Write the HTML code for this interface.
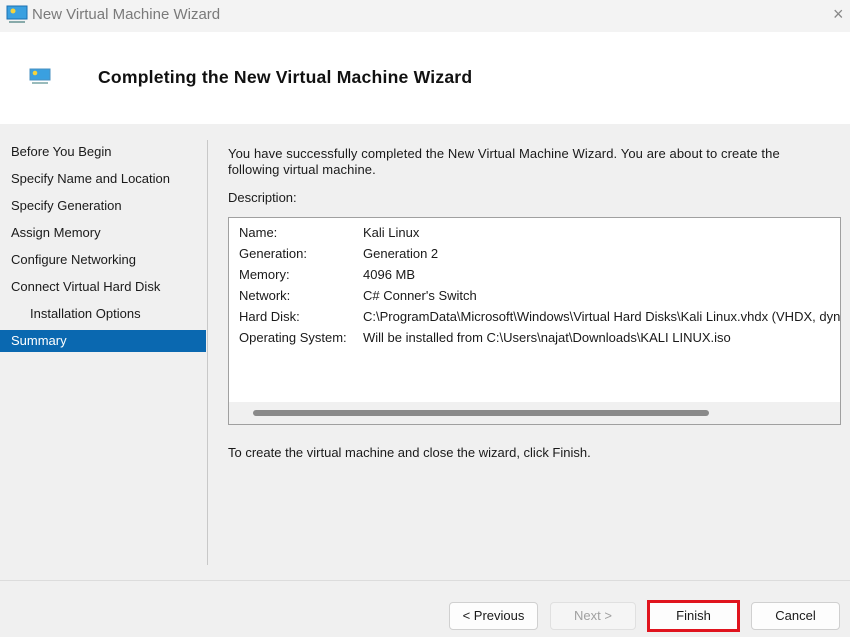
<!DOCTYPE html>
<html><head><meta charset="utf-8"><style>
*{margin:0;padding:0;box-sizing:border-box}
body{width:850px;height:637px;overflow:hidden;background:#f0f0f0;font-family:"Liberation Sans","DejaVu Sans",sans-serif;font-size:13px;color:#1a1a1a;position:relative}
.a{position:absolute;white-space:nowrap}
.nav{left:11px;font-size:13px}
.btn{position:absolute;top:602px;height:28px;background:#fdfdfd;border:1px solid #d0d0d0;border-radius:4px;text-align:center;line-height:26px;font-size:13px}
</style></head><body>
<div class="a" style="left:0;top:0;width:850px;height:32px;background:#f3f3f3"></div>
<svg class="a" style="left:6px;top:5px" width="22" height="20"><rect x="1" y="1" width="20" height="13" fill="#3aa0e0" stroke="#1b6fb0"/><circle cx="7" cy="6" r="2.5" fill="#f5d33c"/><rect x="3" y="16" width="16" height="2" fill="#8aa"/></svg>
<div class="a" style="left:32px;top:6px;font-size:15px;color:#7a7a7a">New Virtual Machine Wizard</div>
<div class="a" style="left:833px;top:4px;font-size:18px;color:#888">×</div>
<div class="a" style="left:0;top:32px;width:850px;height:92px;background:#fff"></div>
<svg class="a" style="left:29px;top:68px" width="22" height="18"><rect x="1" y="1" width="20" height="11" fill="#3aa0e0" stroke="#4a90c0"/><circle cx="6" cy="5" r="2.3" fill="#f5d33c"/><rect x="3" y="14" width="16" height="2" fill="#9bb"/></svg>
<div class="a" style="left:98px;top:67px;font-size:17.6px;font-weight:bold;color:#111;letter-spacing:0.2px">Completing the New Virtual Machine Wizard</div>
<div class="a nav" style="top:144px">Before You Begin</div>
<div class="a nav" style="top:171px">Specify Name and Location</div>
<div class="a nav" style="top:198px">Specify Generation</div>
<div class="a nav" style="top:225px">Assign Memory</div>
<div class="a nav" style="top:252px">Configure Networking</div>
<div class="a nav" style="top:279px">Connect Virtual Hard Disk</div>
<div class="a nav" style="top:306px;left:30px">Installation Options</div>
<div class="a" style="left:0;top:330px;width:206px;height:22px;background:#0a68b0"></div>
<div class="a nav" style="top:333px;color:#fff">Summary</div>
<div class="a" style="left:207px;top:140px;width:1px;height:425px;background:#c8c8c8"></div>
<div class="a" style="left:228px;top:146px;line-height:16px;letter-spacing:0.1px">You have successfully completed the New Virtual Machine Wizard. You are about to create the<br>following virtual machine.</div>
<div class="a" style="left:228px;top:190px">Description:</div>
<div class="a" style="left:228px;top:217px;width:613px;height:208px;background:#fff;border:1px solid #a0a0a0;overflow:hidden">
<div class="a" style="left:10px;top:4px;line-height:21px">Name:<br>Generation:<br>Memory:<br>Network:<br>Hard Disk:<br>Operating System:</div>
<div class="a" style="left:134px;top:4px;line-height:21px">Kali Linux<br>Generation 2<br>4096 MB<br>C# Conner's Switch<br>C:\ProgramData\Microsoft\Windows\Virtual Hard Disks\Kali Linux.vhdx (VHDX, dynamically)<br>Will be installed from C:\Users\najat\Downloads\KALI LINUX.iso</div>
<div class="a" style="left:0;top:184px;width:613px;height:23px;background:#f0f0f0"></div>
<div class="a" style="left:24px;top:192px;width:456px;height:6px;background:#8a8a8a;border-radius:3px"></div>
</div>
<div class="a" style="left:228px;top:445px">To create the virtual machine and close the wizard, click Finish.</div>
<div class="a" style="left:0;top:580px;width:850px;height:1px;background:#dcdcdc"></div>
<div class="btn" style="left:449px;width:89px">&lt; Previous</div>
<div class="btn" style="left:550px;width:86px;color:#a0a0a0;background:#f5f5f5;border-color:#e0e0e0">Next &gt;</div>
<div class="btn" style="left:647px;width:93px;top:600px;height:32px;border:3px solid #e0141e;border-radius:0;line-height:26px">Finish</div>
<div class="btn" style="left:751px;width:89px">Cancel</div>
</body></html>
